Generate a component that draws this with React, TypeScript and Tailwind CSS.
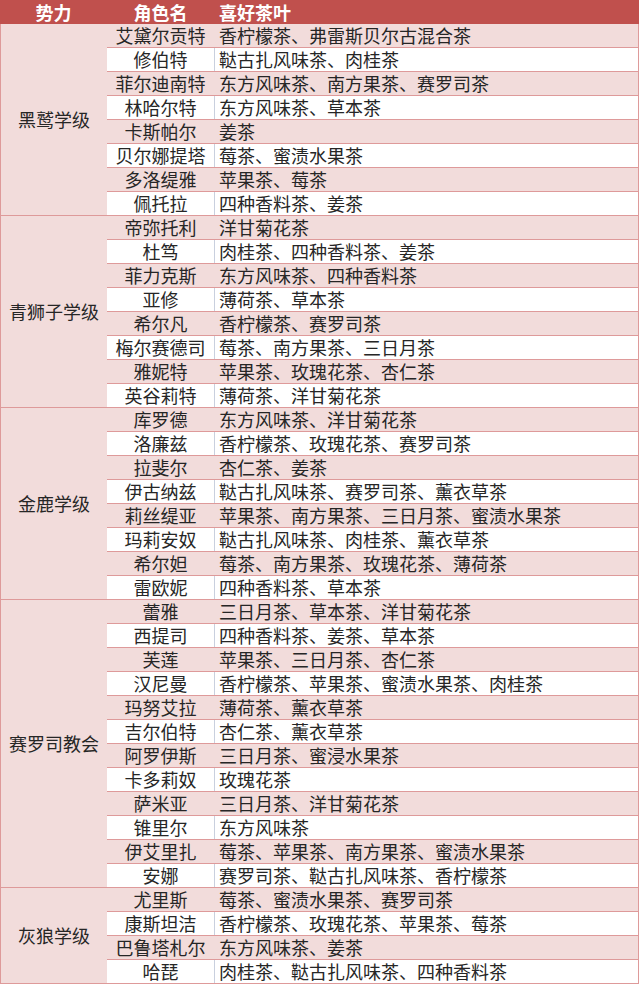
import React from 'react';

type Member = [string, string];
type Faction = { name: string; members: Member[] };

const factions: Faction[] = [
	{
		name: '黑鹫学级',
		members: [
			['艾黛尔贡特', '香柠檬茶、弗雷斯贝尔古混合茶'],
			['修伯特', '鞑古扎风味茶、肉桂茶'],
			['菲尔迪南特', '东方风味茶、南方果茶、赛罗司茶'],
			['林哈尔特', '东方风味茶、草本茶'],
			['卡斯帕尔', '姜茶'],
			['贝尔娜提塔', '莓茶、蜜渍水果茶'],
			['多洛缇雅', '苹果茶、莓茶'],
			['佩托拉', '四种香料茶、姜茶'],
		],
	},
	{
		name: '青狮子学级',
		members: [
			['帝弥托利', '洋甘菊花茶'],
			['杜笃', '肉桂茶、四种香料茶、姜茶'],
			['菲力克斯', '东方风味茶、四种香料茶'],
			['亚修', '薄荷茶、草本茶'],
			['希尔凡', '香柠檬茶、赛罗司茶'],
			['梅尔赛德司', '莓茶、南方果茶、三日月茶'],
			['雅妮特', '苹果茶、玫瑰花茶、杏仁茶'],
			['英谷莉特', '薄荷茶、洋甘菊花茶'],
		],
	},
	{
		name: '金鹿学级',
		members: [
			['库罗德', '东方风味茶、洋甘菊花茶'],
			['洛廉兹', '香柠檬茶、玫瑰花茶、赛罗司茶'],
			['拉斐尔', '杏仁茶、姜茶'],
			['伊古纳兹', '鞑古扎风味茶、赛罗司茶、薰衣草茶'],
			['莉丝缇亚', '苹果茶、南方果茶、三日月茶、蜜渍水果茶'],
			['玛莉安奴', '鞑古扎风味茶、肉桂茶、薰衣草茶'],
			['希尔妲', '莓茶、南方果茶、玫瑰花茶、薄荷茶'],
			['雷欧妮', '四种香料茶、草本茶'],
		],
	},
	{
		name: '赛罗司教会',
		members: [
			['蕾雅', '三日月茶、草本茶、洋甘菊花茶'],
			['西提司', '四种香料茶、姜茶、草本茶'],
			['芙莲', '苹果茶、三日月茶、杏仁茶'],
			['汉尼曼', '香柠檬茶、苹果茶、蜜渍水果茶、肉桂茶'],
			['玛努艾拉', '薄荷茶、薰衣草茶'],
			['吉尔伯特', '杏仁茶、薰衣草茶'],
			['阿罗伊斯', '三日月茶、蜜浸水果茶'],
			['卡多莉奴', '玫瑰花茶'],
			['萨米亚', '三日月茶、洋甘菊花茶'],
			['锥里尔', '东方风味茶'],
			['伊艾里扎', '莓茶、苹果茶、南方果茶、蜜渍水果茶'],
			['安娜', '赛罗司茶、鞑古扎风味茶、香柠檬茶'],
		],
	},
	{
		name: '灰狼学级',
		members: [
			['尤里斯', '莓茶、蜜渍水果茶、赛罗司茶'],
			['康斯坦洁', '香柠檬茶、玫瑰花茶、苹果茶、莓茶'],
			['巴鲁塔札尔', '东方风味茶、姜茶'],
			['哈琵', '肉桂茶、鞑古扎风味茶、四种香料茶'],
		],
	},
];

function MemberRow({ name, tea, pink, last }: { name: string; tea: string; pink: boolean; last: boolean }) {
	const fill = pink ? 'bg-[#f2dcdb]' : 'bg-[#ffffff]';
	return (
		<div
			className={`flex leading-[23px] ${fill} ${
				last ? 'h-[23px]' : 'h-[24px] border-b border-[#de9a9a]'
			}`}
		>
			<div className={`w-[107px] whitespace-nowrap text-center ${fill}`}>{name}</div>
			<div
				className={`flex-1 whitespace-nowrap pl-[4px] ${fill} ${
					pink ? 'border-l border-[#f2dcdb]' : 'border-l border-[#c9d0de]'
				}`}
			>
				{tea}
			</div>
		</div>
	);
}

export default function App() {
	return (
		<div className="w-[639px] bg-[#ffffff] font-['Noto_Sans_CJK_SC',sans-serif] text-[18px] text-[#262626]">
			{/* Header */}
			<div className="flex h-[24px] items-center overflow-hidden bg-[#c0504d] font-bold leading-[22px] text-white">
				<div className="w-[107px] text-center">势力</div>
				<div className="w-[107px] text-center">角色名</div>
				<div className="flex-1 pl-[5px]">喜好茶叶</div>
			</div>

			{/* Body */}
			<div className="border-r border-l border-[#de9a9a]">
				{factions.map((faction) => (
					<div key={faction.name} className="flex border-b border-[#de9a9a]">
						<div className="flex w-[106px] items-center justify-center bg-[#f2dcdb]">
							{faction.name}
						</div>
						<div className="flex-1">
							{faction.members.map(([name, tea], i) => (
								<MemberRow
									key={name}
									name={name}
									tea={tea}
									pink={i % 2 === 0}
									last={i === faction.members.length - 1}
								/>
							))}
						</div>
					</div>
				))}
			</div>
		</div>
	);
}
